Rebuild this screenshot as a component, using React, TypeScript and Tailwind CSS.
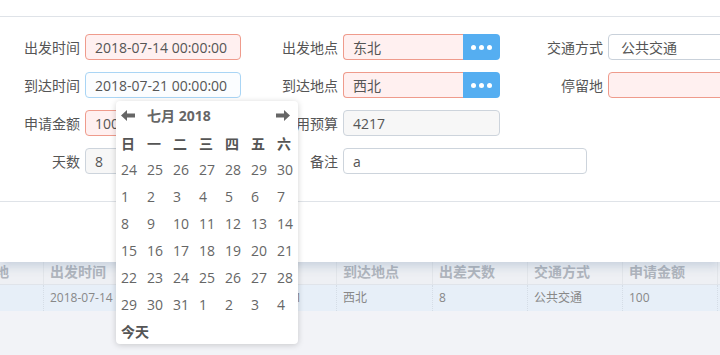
const font = { fontFamily: '"Open Sans", "Noto Sans CJK SC", sans-serif' };

const weeks = [
  [24, 25, 26, 27, 28, 29, 30],
  [1, 2, 3, 4, 5, 6, 7],
  [8, 9, 10, 11, 12, 13, 14],
  [15, 16, 17, 18, 19, 20, 21],
  [22, 23, 24, 25, 26, 27, 28],
  [29, 30, 31, 1, 2, 3, 4],
];

const cols = [
  { w: "w-[100px]", head: "出发地", cell: "东北" },
  { w: "w-[189px]", head: "出发时间", cell: "2018-07-14 00:00:00" },
  { w: "w-[104px]", head: "到达时间", cell: "2018-07-21" },
  { w: "w-[96px]", head: "到达地点", cell: "西北" },
  { w: "w-[95px]", head: "出差天数", cell: "8" },
  { w: "w-[95px]", head: "交通方式", cell: "公共交通" },
  { w: "w-[95px]", head: "申请金额", cell: "100" },
  { w: "w-[95px]", head: "备注", cell: "a" },
];

function Label({ w, children }: { w: string; children: React.ReactNode }) {
  return <div className={`${w} shrink-0 pr-[5px] text-right text-[14px] text-[#555]`}>{children}</div>;
}

function Dots() {
  return (
    <button className="flex h-[26px] w-[37px] shrink-0 items-center justify-center gap-[3px] rounded-r-[4px] bg-[#55aef1]">
      <span className="h-[5px] w-[5px] rounded-full bg-white" />
      <span className="h-[5px] w-[5px] rounded-full bg-white" />
      <span className="h-[5px] w-[5px] rounded-full bg-white" />
    </button>
  );
}

function Arrow({ flip }: { flip?: boolean }) {
  return (
    <svg width="14" height="11" viewBox="0 0 14 11" className={flip ? "-scale-x-100" : ""}>
      <path d="M0 5.5 L6 0 L6 3.5 L14 3.5 L14 7.5 L6 7.5 L6 11 Z" fill="#666" />
    </svg>
  );
}

export default function App() {
  return (
    <div style={font} className="relative h-[355px] w-[720px] overflow-hidden bg-[#f2f3f7]">
      {/* table behind the dialog */}
      <div className="ml-[-56px] pt-[253px]">
        <div className="flex h-[32px] border-b border-[#e0e4ea] bg-[#eef0f4]">
          {cols.map((c, i) => (
            <div
              key={i}
              className={`${c.w} shrink-0 border-r border-[#e3e6ea] pt-[8px] text-[14px] font-bold text-[#b0b5bd] whitespace-nowrap overflow-hidden ${i === 0 ? "pr-[34px] text-right" : "pl-[6px]"}`}
            >
              {c.head}
            </div>
          ))}
        </div>
        <div className="flex h-[26px] bg-[#e7eff8]">
          {cols.map((c, i) => (
            <div key={i} className={`${c.w} shrink-0 border-r border-dotted border-[#d5dde6] pl-[6px] pt-[4px] text-[12px] text-[#888] whitespace-nowrap overflow-hidden`}>
              {i === 0 ? "" : c.cell}
            </div>
          ))}
        </div>
      </div>

      {/* dialog */}
      <div className="absolute left-0 right-0 top-0 h-[262px] bg-white shadow-[0_4px_10px_rgba(80,110,150,0.25)]">
        <div className="h-[17px] border-b border-[#dfe3e8]" />
        <div className="flex flex-col gap-[12px] pt-[17px] text-[14px] text-[#555]">
          <div className="flex h-[26px] items-center">
            <Label w="w-[85px]">出发时间</Label>
            <div className="flex h-[26px] w-[156px] shrink-0 items-center rounded-[4px] border border-[#ef9b8c] bg-[#fff0f0] pl-[9px]">2018-07-14 00:00:00</div>
            <Label w="w-[102px]">出发地点</Label>
            <div className="flex h-[26px] w-[120px] shrink-0 items-center rounded-l-[4px] border border-r-0 border-[#ef9b8c] bg-[#fff0f0] pl-[9px]">东北</div>
            <Dots />
            <Label w="w-[108px]">交通方式</Label>
            <div className="flex h-[26px] w-[130px] shrink-0 items-center rounded-[4px] border border-[#c9d1da] bg-white pl-[12px]">公共交通</div>
          </div>
          <div className="flex h-[26px] items-center">
            <Label w="w-[85px]">到达时间</Label>
            <div className="flex h-[26px] w-[156px] shrink-0 items-center rounded-[4px] border border-[#a9d5f5] bg-[#fbfdff] pl-[9px]">2018-07-21 00:00:00</div>
            <Label w="w-[102px]">到达地点</Label>
            <div className="flex h-[26px] w-[120px] shrink-0 items-center rounded-l-[4px] border border-r-0 border-[#ef9b8c] bg-[#fff0f0] pl-[9px]">西北</div>
            <Dots />
            <Label w="w-[108px]">停留地</Label>
            <div className="h-[26px] w-[130px] shrink-0 rounded-[4px] border border-[#ef9b8c] bg-[#fff0f0]" />
          </div>
          <div className="flex h-[26px] items-center">
            <Label w="w-[85px]">申请金额</Label>
            <div className="flex h-[26px] w-[156px] shrink-0 items-center rounded-[4px] border border-[#ef9b8c] bg-[#fff0f0] pl-[9px]">100</div>
            <Label w="w-[102px]">费用预算</Label>
            <div className="flex h-[26px] w-[157px] shrink-0 items-center rounded-[4px] border border-[#cdd4dc] bg-[#f7f7f7] pl-[9px]">4217</div>
          </div>
          <div className="flex h-[26px] items-center">
            <Label w="w-[85px]">天数</Label>
            <div className="flex h-[26px] w-[156px] shrink-0 items-center rounded-[4px] border border-[#cdd4dc] bg-[#f7f7f7] pl-[9px]">8</div>
            <Label w="w-[102px]">备注</Label>
            <div className="flex h-[26px] w-[244px] shrink-0 items-center rounded-[4px] border border-[#cdd4dc] bg-white pl-[9px]">a</div>
          </div>
        </div>
        <div className="mt-[27px] border-t border-[#dfe3e8]" />
      </div>

      {/* date picker */}
      <div className="absolute left-[116px] top-[101px] h-[243px] w-[182px] rounded-[4px] bg-white pl-[5px] text-[14px] text-[#666] shadow-[0_1px_6px_rgba(0,0,0,0.18)]">
        <div className="flex h-[28px] items-center pt-[1px]">
          <Arrow />
          <div className="ml-[12px] font-bold text-[#666]">七月 2018</div>
          <div className="ml-auto mr-[8px] flex">
            <Arrow flip />
          </div>
        </div>
        <div className="grid h-[27px] grid-cols-[repeat(7,26px)] items-center pt-[1px] font-bold text-[#555]">
          {["日", "一", "二", "三", "四", "五", "六"].map((d) => (
            <div key={d}>{d}</div>
          ))}
        </div>
        {weeks.map((w, i) => (
          <div key={i} className="grid h-[27px] grid-cols-[repeat(7,26px)] items-center">
            {w.map((d, j) => (
              <div key={j}>{d}</div>
            ))}
          </div>
        ))}
        <div className="flex h-[27px] items-center font-bold text-[#555]">今天</div>
      </div>
    </div>
  );
}
